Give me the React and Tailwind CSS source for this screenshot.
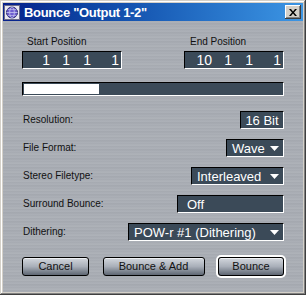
import React from 'react';

// brushed metal look for the dialog body
const metal =
  'bg-[#a7abb2] bg-[image:repeating-linear-gradient(180deg,#a4a8af_0px,#afb3ba_1px,#a1a5ac_3px,#acb0b7_4px,#a6aab1_6px,#b1b5bb_7px,#a3a7ae_9px),repeating-linear-gradient(90deg,rgba(255,255,255,0.05)_0px,rgba(0,0,0,0.04)_41px,rgba(255,255,255,0.05)_83px)]';

const field = 'border border-t-black border-l-black border-b-white border-r-white bg-[#3b4a58] text-white';

const Arrow = () => (
  <svg width="9" height="5" viewBox="0 0 9 5" className="shrink-0">
    <polygon points="0,0 9,0 4.5,5" fill="#fff" />
  </svg>
);

const Row = ({ label, children }) => (
  <div className="flex h-[18px] items-center justify-between">
    <span className="pl-[1px] text-[10px] leading-[12px] text-[#111]">{label}</span>
    {children}
  </div>
);

const Select = ({ value, width }) => (
  <div className={`${field} ${width} flex h-full items-center justify-between pl-[5px] pr-[4px] text-[13px] leading-none`}>
    <span>{value}</span>
    <Arrow />
  </div>
);

const Position = ({ values }) => (
  <div className={`${field} grid h-[18px] w-[100px] grid-cols-[27px_20px_21px_28px] items-center text-right text-[14px] leading-none`}>
    {values.map((v, i) => (
      <span key={i}>{v}</span>
    ))}
  </div>
);

const Button = ({ children, width, def }) => (
  <button
    className={`${width} h-[19px] rounded-[3px] border border-black bg-gradient-to-b from-[#d3d7dd] via-[#a9afb9] to-[#5f6773] text-[11px] leading-none text-[#111] ${
      def ? 'shadow-[inset_0_1px_0_#eef0f3,0_0_0_2px_#fff]' : 'shadow-[inset_0_1px_0_#eef0f3]'
    }`}
  >
    {children}
  </button>
);

const AppIcon = () => (
  <svg width="16" height="15" viewBox="0 0 16 15">
    <rect x="0.5" y="0.5" width="15" height="14" fill="#e8e8f0" stroke="#6a6a8a" />
    <circle cx="8" cy="7.5" r="5.5" fill="#6f5fd0" stroke="#2a2a70" />
    <ellipse cx="8" cy="7.5" rx="2.3" ry="5.5" fill="none" stroke="#c8c8f0" strokeWidth="0.8" />
    <line x1="2.5" y1="7.5" x2="13.5" y2="7.5" stroke="#c8c8f0" strokeWidth="0.8" />
    <line x1="3.5" y1="4.5" x2="12.5" y2="4.5" stroke="#c8c8f0" strokeWidth="0.6" />
    <line x1="3.5" y1="10.5" x2="12.5" y2="10.5" stroke="#c8c8f0" strokeWidth="0.6" />
  </svg>
);

export default function App() {
  return (
    <div className="h-[295px] w-[306px] bg-[#d4d0c8] p-[3px] font-['Liberation_Sans',Arial,sans-serif] shadow-[inset_-1px_-1px_#404040,inset_1px_1px_#d4d0c8,inset_-2px_-2px_#808080,inset_2px_2px_#fff]">
      <div className="flex h-full flex-col">
        {/* title bar */}
        <div className="flex h-[18px] shrink-0 items-center bg-gradient-to-r from-[#08208a] to-[#3d96e4] pl-[1px] pr-[2px]">
          <AppIcon />
          <span className="ml-[4px] text-[13px] font-bold leading-none tracking-[-0.3px] text-white">
            Bounce "Output 1-2"
          </span>
          <div className="ml-auto flex h-[14px] w-[16px] items-center justify-center bg-[#d4d0c8] shadow-[inset_-1px_-1px_#404040,inset_1px_1px_#fff,inset_-2px_-2px_#808080]">
            <svg width="8" height="7" viewBox="0 0 8 7">
              <path d="M0 0h2l2 2.5L6 0h2L5 3.5 8 7H6L4 4.5 2 7H0l3-3.5z" fill="#000" />
            </svg>
          </div>
        </div>

        {/* body */}
        <div className={`${metal} flex flex-1 flex-col px-[19px] pt-[15px]`}>
          <div className="flex justify-between text-[10px] leading-[12px] text-[#111]">
            <span className="pl-[5px]">Start Position</span>
            <span className="w-[100px] pl-[6px]">End Position</span>
          </div>
          <div className="mt-[3px] flex justify-between">
            <Position values={['1', '1', '1', '1']} />
            <Position values={['10', '1', '1', '1']} />
          </div>

          <div className={`${field} mt-[13px] h-[14px] p-[1px]`}>
            <div className="h-full w-[75px] bg-white" />
          </div>

          <div className="mt-[15px] flex flex-col gap-[10px]">
            <Row label="Resolution:">
              <div className={`${field} flex h-full w-[44px] items-center justify-center text-[13px] leading-none`}>16 Bit</div>
            </Row>
            <Row label="File Format:">
              <Select value="Wave" width="w-[58px]" />
            </Row>
            <Row label="Stereo Filetype:">
              <Select value="Interleaved" width="w-[93px]" />
            </Row>
            <Row label="Surround Bounce:">
              <div className={`${field} flex h-full w-[107px] items-center pl-[9px] text-[13px] leading-none`}>Off</div>
            </Row>
            <Row label="Dithering:">
              <Select value="POW-r #1 (Dithering)" width="w-[156px]" />
            </Row>
          </div>

          <div className="mt-[16px] flex justify-between">
            <Button width="w-[67px]">Cancel</Button>
            <Button width="w-[102px]">Bounce &amp; Add</Button>
            <Button width="w-[66px]" def>
              Bounce
            </Button>
          </div>
        </div>
      </div>
    </div>
  );
}
